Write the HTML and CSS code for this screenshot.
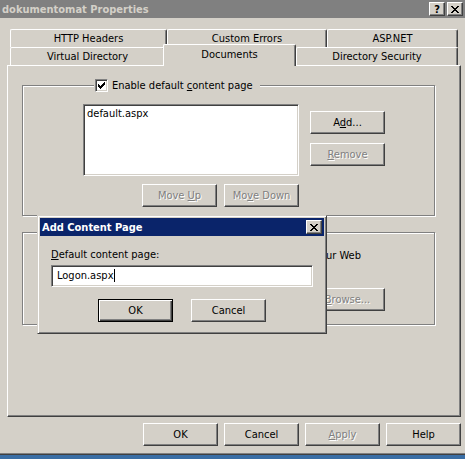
FILE: index.html
```html
<!DOCTYPE html>
<html>
<head>
<meta charset="utf-8">
<title>dokumentomat Properties</title>
<link rel="stylesheet" href="styles.css">
</head>
<body>
<div class="window">
  <div class="titlebar">
    <span class="title">dokumentomat Properties</span>
    <div class="caption-btns">
      <span class="cap-btn help">?</span>
      <span class="cap-btn"><svg class="x-glyph" width="8" height="7" viewBox="0 0 8 7"><path d="M0 0h2v1h-2z M6 0h2v1h-2z M1 1h2v1h-2z M5 1h2v1h-2z M2 2h4v1h-4z M3 3h2v1h-2z M2 4h4v1h-4z M1 5h2v1h-2z M5 5h2v1h-2z M0 6h2v1h-2z M6 6h2v1h-2z"/></svg></span>
    </div>
  </div>

  <div class="tabs">
    <div class="tab-row">
      <div class="tab w-http">HTTP Headers</div>
      <div class="tab w-err">Custom Errors</div>
      <div class="tab w-asp">ASP.NET</div>
    </div>
    <div class="tab-row">
      <div class="tab w-vd">Virtual Directory</div>
      <div class="tab selected w-doc">Documents</div>
      <div class="tab w-ds">Directory Security</div>
    </div>
  </div>

  <div class="panel">
    <fieldset class="group g1">
      <legend><span class="check"><svg class="check-glyph" width="7" height="7" viewBox="0 0 7 7"><path d="M6 0h1v1h-1z M5 1h2v1h-2z M0 2h1v1h-1z M4 2h3v1h-3z M0 3h2v1h-2z M3 3h3v1h-3z M0 4h5v1h-5z M1 5h3v1h-3z M2 6h1v1h-1z"/></svg></span><span>Enable default <u>c</u>ontent page</span></legend>
      <div class="g1-body">
        <div class="list-col">
          <div class="listbox"><div class="list-item">default.aspx</div></div>
          <div class="move-row">
            <button class="btn" disabled>Move <u>U</u>p</button>
            <button class="btn" disabled>Mo<u>v</u>e Down</button>
          </div>
        </div>
        <div class="side-col">
          <button class="btn">A<u>d</u>d...</button>
          <button class="btn" disabled><u>R</u>emove</button>
        </div>
      </div>
    </fieldset>

    <fieldset class="group g2">
      <legend><span class="check"></span></legend>
      <div class="footer-line"><span>every document your Web</span></div>
      <div class="browse-row">
        <div class="textbox disabled-box"></div>
        <button class="btn" disabled><u>B</u>rowse...</button>
      </div>
    </fieldset>
  </div>

  <div class="main-buttons">
    <button class="btn">OK</button>
    <button class="btn">Cancel</button>
    <button class="btn" disabled><u>A</u>pply</button>
    <button class="btn">Help</button>
  </div>
</div>

<div class="dialog">
  <div class="dlg-title">
    <span>Add Content Page</span>
    <span class="cap-btn dlg-close"><svg class="x-glyph" width="8" height="7" viewBox="0 0 8 7"><path d="M0 0h2v1h-2z M6 0h2v1h-2z M1 1h2v1h-2z M5 1h2v1h-2z M2 2h4v1h-4z M3 3h2v1h-2z M2 4h4v1h-4z M1 5h2v1h-2z M5 5h2v1h-2z M0 6h2v1h-2z M6 6h2v1h-2z"/></svg></span>
  </div>
  <div class="dlg-body">
    <div class="dlg-label"><u>D</u>efault content page:</div>
    <div class="textbox dlg-input">Logon.aspx<span class="caret"></span></div>
    <div class="dlg-buttons">
      <button class="btn default">OK</button>
      <button class="btn">Cancel</button>
    </div>
  </div>
</div>
</body>
</html>
```
FILE: styles.css
```css
* { box-sizing: border-box; }

html, body {
  margin: 0;
  padding: 0;
}

body {
  width: 465px;
  height: 459px;
  overflow: hidden;
  position: relative;
  background: #3a6ea5;
  font: 11px/13px "DejaVu Sans Condensed", "DejaVu Sans", sans-serif;
  color: #000;
}

u { text-decoration: underline; text-underline-offset: 1px; }

.window {
  height: 455px;
  background: #d4d0c8;
  border-bottom: 1px solid #404040;
  box-shadow: inset 0 -1px #808080;
  display: flex;
  flex-direction: column;
}

/* title bar */
.titlebar {
  height: 18px;
  background: #808080;
  display: flex;
  align-items: center;
  justify-content: space-between;
  padding: 0 2px 0 2px;
}

.title {
  color: #d4d0c8;
  font-weight: bold;
}

.caption-btns {
  display: flex;
  gap: 2px;
}

.cap-btn {
  width: 16px;
  height: 14px;
  background: #d4d0c8;
  border: 1px solid;
  border-color: #fff #404040 #404040 #fff;
  box-shadow: inset -1px -1px #808080;
  display: flex;
  align-items: center;
  justify-content: center;
  font-weight: bold;
  color: #000;
}

.x-glyph { display: block; shape-rendering: crispEdges; fill: #000; }

/* tabs */
.tabs {
  padding: 11px 0 0 10px;
}

.tab-row {
  display: flex;
  height: 18px;
}

.tab {
  height: 18px;
  padding-top: 2px;
  background: #d4d0c8;
  border-top: 1px solid #fff;
  border-left: 1px solid #fff;
  border-right: 1px solid #404040;
  box-shadow: inset -1px 0 #808080;
  border-radius: 2px 2px 0 0;
  display: flex;
  justify-content: center;
  align-items: flex-start;
  white-space: nowrap;
}

.w-http { width: 157px; }
.w-err { width: 160px; }
.w-asp { width: 131px; }
.w-vd { width: 155px; }
.w-doc { width: 133px; margin-left: -2px; }
.w-ds { width: 162px; }

.tab.selected {
  position: relative;
  z-index: 1;
  height: 22px;
  margin-top: -3px;
  padding-top: 3px;
}

/* panel */
.panel {
  width: 454px;
  height: 352px;
  margin-left: 7px;
  padding-left: 14px;
  border: 1px solid;
  border-color: #fff #404040 #404040 #fff;
  box-shadow: inset -1px -1px #808080;
}

.group {
  width: 413px;
  margin: 0;
  padding: 0;
  border: 1px solid #808080;
  box-shadow: inset 1px 1px #fff, 1px 1px #fff;
  min-inline-size: auto;
}

.group legend {
  margin-left: 11px;
  padding: 0 7px 0 1px;
  height: 13px;
  display: flex;
  align-items: center;
  gap: 4px;
  background: #d4d0c8;
}

.check {
  width: 13px;
  height: 13px;
  flex: none;
  background: #fff;
  border: 1px solid;
  border-color: #808080 #fff #fff #808080;
  box-shadow: inset 1px 1px #404040, inset -1px -1px #d4d0c8;
}

.check-glyph {
  display: block;
  margin: 2px;
  shape-rendering: crispEdges;
  fill: #000;
}

.g1 {
  margin-top: 13px;
  padding: 12px 0 8px 60px;
}

.g1-body {
  display: flex;
  gap: 11px;
}

.list-col {
  display: flex;
  flex-direction: column;
  gap: 8px;
}

.listbox {
  width: 216px;
  height: 72px;
  background: #fff;
  border: 1px solid;
  border-color: #808080 #fff #fff #808080;
  box-shadow: inset 1px 1px #404040, inset -1px -1px #d4d0c8;
  padding: 2px 3px;
}

.move-row {
  display: flex;
  justify-content: flex-end;
  gap: 7px;
}

.side-col {
  padding-top: 7px;
  display: flex;
  flex-direction: column;
  gap: 9px;
}

.g2 {
  margin-top: 10px;
  padding: 10px 0 13px 28px;
}

.footer-line {
  width: 310px;
  display: flex;
  justify-content: flex-end;
  white-space: nowrap;
}

.footer-line span { flex: none; }

.browse-row {
  margin-top: 26px;
  display: flex;
  justify-content: flex-end;
  align-items: center;
  gap: 10px;
  padding-right: 49px;
}

.textbox {
  background: #fff;
  border: 1px solid;
  border-color: #808080 #fff #fff #808080;
  box-shadow: inset 1px 1px #404040, inset -1px -1px #d4d0c8;
}

.disabled-box {
  width: 220px;
  height: 21px;
  background: #d4d0c8;
}

/* buttons */
.btn {
  width: 75px;
  height: 23px;
  padding: 0;
  margin: 0;
  background: #d4d0c8;
  border: 1px solid;
  border-color: #fff #404040 #404040 #fff;
  box-shadow: inset -1px -1px #808080;
  font: inherit;
  color: #000;
  flex: none;
}

.btn:disabled {
  color: #808080;
  text-shadow: 1px 1px 0 #fff;
}

.btn.default {
  border-color: #000;
  box-shadow: inset 1px 1px #fff, inset -1px -1px #404040, inset -2px -2px #808080;
}

.main-buttons {
  margin-top: 6px;
  padding-right: 4px;
  display: flex;
  justify-content: flex-end;
  gap: 6px;
}

/* Add Content Page dialog (floats over the property sheet) */
.dialog {
  position: absolute;
  left: 37px;
  top: 215px;
  width: 290px;
  height: 119px;
  padding: 2px;
  background: #d4d0c8;
  border: 1px solid;
  border-color: #d4d0c8 #404040 #404040 #d4d0c8;
  box-shadow: inset 1px 1px #fff, inset -1px -1px #808080;
  z-index: 5;
}

.dlg-title {
  height: 18px;
  background: #0a246a;
  color: #fff;
  font-weight: bold;
  display: flex;
  align-items: center;
  justify-content: space-between;
  padding: 0 2px 0 2px;
}

.dlg-body {
  padding: 12px 0 0 11px;
}

.dlg-input {
  width: 262px;
  height: 22px;
  margin-top: 4px;
  padding: 3px 0 0 5px;
  display: flex;
  align-items: flex-start;
}

.caret {
  width: 1px;
  height: 13px;
  background: #000;
  margin-left: 1px;
}

.dlg-buttons {
  margin-top: 12px;
  padding-right: 11px;
  display: flex;
  justify-content: center;
  gap: 18px;
}
```
